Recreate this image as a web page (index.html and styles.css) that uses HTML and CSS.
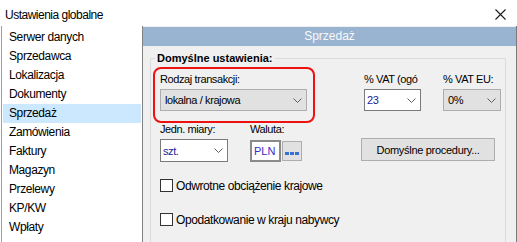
FILE: index.html
```html
<!DOCTYPE html>
<html lang="pl">
<head>
    <meta charset="UTF-8">
    <title>Ustawienia globalne</title>
    <link rel="stylesheet" href="styles.css">
</head>
<body>
<div class="window">
    <div class="titlebar">
        <span class="title">Ustawienia globalne</span>
        <svg class="close" width="11" height="11" viewBox="0 0 11 11">
            <path d="M0.5 0.5L10.5 10.5M10.5 0.5L0.5 10.5" stroke="#1a1a1a" stroke-width="1.1" fill="none"/>
        </svg>
    </div>
    <div class="main">
        <ul class="nav">
            <li>Serwer danych</li>
            <li>Sprzedawca</li>
            <li>Lokalizacja</li>
            <li>Dokumenty</li>
            <li class="active">Sprzedaż</li>
            <li>Zamówienia</li>
            <li>Faktury</li>
            <li>Magazyn</li>
            <li>Przelewy</li>
            <li>KP/KW</li>
            <li>Wpłaty</li>
        </ul>
        <div class="panel">
            <div class="panel-head">Sprzedaż</div>
            <fieldset class="group">
                <legend>Domyślne ustawienia:</legend>
                <div class="row row-top">
                    <div class="highlight">
                        <div class="lbl">Rodzaj transakcji:</div>
                        <div class="combo combo-gray combo-type">
                            <span>lokalna / krajowa</span>
                            <svg class="chev" width="9" height="5" viewBox="0 0 9 5"><path d="M0.5 0.5L4.5 4.5L8.5 0.5" stroke="#606060" fill="none"/></svg>
                        </div>
                    </div>
                    <div class="field field-vat">
                        <div class="lbl">% VAT (ogó</div>
                        <div class="combo combo-white">
                            <span class="val">23</span>
                            <svg class="chev" width="9" height="5" viewBox="0 0 9 5"><path d="M0.5 0.5L4.5 4.5L8.5 0.5" stroke="#606060" fill="none"/></svg>
                        </div>
                    </div>
                    <div class="field field-vateu">
                        <div class="lbl">% VAT EU:</div>
                        <div class="combo combo-gray">
                            <span>0%</span>
                            <svg class="chev" width="9" height="5" viewBox="0 0 9 5"><path d="M0.5 0.5L4.5 4.5L8.5 0.5" stroke="#606060" fill="none"/></svg>
                        </div>
                    </div>
                </div>
                <div class="row row-mid">
                    <div class="field field-unit">
                        <div class="lbl">Jedn. miary:</div>
                        <div class="combo combo-white">
                            <span class="val">szt.</span>
                            <svg class="chev" width="9" height="5" viewBox="0 0 9 5"><path d="M0.5 0.5L4.5 4.5L8.5 0.5" stroke="#606060" fill="none"/></svg>
                        </div>
                    </div>
                    <div class="field field-cur">
                        <div class="lbl">Waluta:</div>
                        <div class="cur">
                            <div class="cur-box">PLN</div>
                            <div class="dots-btn">
                                <span class="dot"></span><span class="dot"></span><span class="dot"></span>
                            </div>
                        </div>
                    </div>
                    <button class="btn">Domyślne procedury...</button>
                </div>
                <label class="check check-first"><span class="box"></span>Odwrotne obciążenie krajowe</label>
                <label class="check"><span class="box"></span>Opodatkowanie w kraju nabywcy</label>
            </fieldset>
        </div>
    </div>
</div>
</body>
</html>
```

FILE: styles.css
```css
body
{
    margin: 0;
    font-family: "Liberation Sans", Arial, sans-serif;
    background-color: #fff;
    color: #000;
}

.window
{
    width: 517px;
    height: 242px;
    overflow: hidden;
    display: flex;
    flex-direction: column;
}

.titlebar
{
    height: 26px;
    flex: none;
    box-sizing: border-box;
    padding: 7px 11px 0 5px;
    display: flex;
    justify-content: space-between;
    align-items: flex-start;
    background-color: #fff;
}

.title
{
    font-size: 12px;
    line-height: 16px;
    letter-spacing: -0.5px;
}

.close
{
    margin-top: 2px;
}

.main
{
    flex: 1;
    display: flex;
    min-height: 0;
}

/* left list */
.nav
{
    list-style: none;
    margin: 0 0 0 1px;
    padding: 2px 1px 0 1px;
    width: 138px;
    flex: none;
    background-color: #fff;
    border-left: 1px solid #a0a0a0;
    border-right: 1px solid #828282;
}

.nav li
{
    height: 19px;
    line-height: 19px;
    padding-left: 6px;
    font-size: 12px;
    letter-spacing: -0.4px;
}

.nav li.active
{
    background-color: #cce8ff;
}

/* right panel */
.panel
{
    flex: 1;
    padding-top: 1px;
    background-color: #f0f0f0;
    border-right: 1px solid #7a7a7a;
    min-width: 0;
}

.panel-head
{
    height: 19px;
    line-height: 19px;
    text-align: center;
    font-size: 12px;
    color: #f7f9fc;
    background-color: #99b4d1;
}

.group
{
    margin: 6px 10px 0 7px;
    padding: 0;
    height: 220px;
    border: 1px solid #dcdcdc;
    min-width: 0;
    font-size: 11px;
    letter-spacing: -0.4px;
}

.group legend
{
    margin-left: 4px;
    padding: 0 2px;
    font-weight: bold;
    line-height: 13px;
    letter-spacing: 0;
}

.row
{
    display: flex;
    align-items: flex-start;
}

.row-top
{
    margin-top: 2px;
}

.lbl
{
    line-height: 13px;
    white-space: nowrap;
}

.highlight
{
    margin-left: 2px;
    width: 147px;
    padding: 4px 6px 10px 5px;
    border: 2px solid #ee1111;
    border-radius: 8px;
}

.combo
{
    height: 22px;
    box-sizing: border-box;
    margin-top: 3px;
    padding: 0 4px 0 4px;
    display: flex;
    align-items: center;
    justify-content: space-between;
}

.combo-gray
{
    background-color: #e1e1e1;
    border: 1px solid #adadad;
}

.combo-white
{
    padding-left: 2px;
    background-color: #fff;
    border: 1px solid #7a7a7a;
}

.val
{
    color: #1c1c96;
}

.field-vat
{
    margin-left: 49px;
    margin-top: 6px;
    width: 57px;
}

.field-vateu
{
    margin-left: 22px;
    margin-top: 6px;
    width: 58px;
}

.field-unit
{
    margin-left: 9px;
    width: 68px;
}

.field-unit .combo
{
    margin-top: 3px;
    height: 23px;
}

.field-cur
{
    margin-left: 22px;
}

.cur
{
    display: flex;
    align-items: center;
    margin-top: 4px;
}

.cur-box
{
    width: 31px;
    height: 22px;
    box-sizing: border-box;
    padding-left: 2px;
    line-height: 18px;
    font-size: 11px;
    letter-spacing: 0;
    color: #3a2bc4;
    background-color: #fff;
    border: 2px solid #8a8a8a;
}

.dots-btn
{
    width: 20px;
    height: 20px;
    box-sizing: border-box;
    margin-left: 1px;
    padding-bottom: 5px;
    display: flex;
    justify-content: center;
    align-items: flex-end;
    gap: 1px;
    background-color: #e1e1e1;
    border: 1px solid #adadad;
}

.dot
{
    width: 4px;
    height: 3px;
    background-color: #3b6fd4;
}

.btn
{
    margin: 15px 0 0 59px;
    width: 134px;
    height: 23px;
    padding: 0;
    font-family: inherit;
    font-size: 11px;
    letter-spacing: -0.3px;
    color: #000;
    background-color: #e1e1e1;
    border: 1px solid #adadad;
    border-radius: 0;
}

.check
{
    display: flex;
    align-items: center;
    margin-left: 9px;
    height: 13px;
    margin-top: 21px;
    font-size: 12px;
}

.check-first
{
    margin-top: 17px;
}

.check .box
{
    width: 13px;
    height: 13px;
    box-sizing: border-box;
    margin-right: 3px;
    background-color: #fff;
    border: 1px solid #333;
}
```
